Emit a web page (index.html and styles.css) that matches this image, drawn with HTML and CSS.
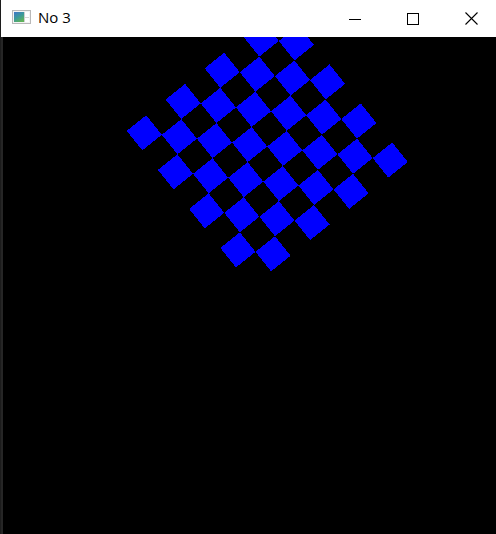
FILE: index.html
```html
<!DOCTYPE html>
<html lang="en">
<head>
<meta charset="utf-8">
<title>No 3</title>
<link rel="stylesheet" href="styles.css">
</head>
<body>
<div class="window">
  <header class="titlebar">
    <svg class="app-icon" width="19" height="14" viewBox="0 0 19 14">
      <defs>
        <linearGradient id="ig" x1="0" y1="0" x2="0.6" y2="1">
          <stop offset="0" stop-color="#3f74c9"/>
          <stop offset="0.55" stop-color="#3c9a9a"/>
          <stop offset="1" stop-color="#5fb25a"/>
        </linearGradient>
      </defs>
      <rect x="0.5" y="0.5" width="18" height="13" fill="#f4f4f4" stroke="#b9b9b9"/>
      <rect x="2" y="2" width="10" height="10" fill="url(#ig)"/>
      <rect x="13" y="2" width="4" height="10" fill="#ffffff"/>
      <line x1="13" y1="7.5" x2="17" y2="7.5" stroke="#d6d6d6"/>
      <line x1="12.5" y1="2" x2="12.5" y2="12" stroke="#cfcfcf"/>
    </svg>
    <span class="title">No 3</span>
    <div class="controls">
      <div class="ctl">
        <svg width="12" height="12" viewBox="0 0 12 12"><line x1="0" y1="6.5" x2="12" y2="6.5" stroke="#000" stroke-width="1"/></svg>
      </div>
      <div class="ctl">
        <svg width="12" height="12" viewBox="0 0 12 12"><rect x="0.5" y="0.5" width="11" height="11" fill="none" stroke="#000" stroke-width="1"/></svg>
      </div>
      <div class="ctl">
        <svg width="13" height="13" viewBox="0 0 13 13"><path d="M0.5 0.5 L12.5 12.5 M12.5 0.5 L0.5 12.5" stroke="#000" stroke-width="1.1" fill="none"/></svg>
      </div>
    </div>
  </header>
  <main class="canvas">
    <svg class="board" width="493" height="497" viewBox="0 0 493 497" shape-rendering="crispEdges">
      <g transform="translate(123.6 93.85) rotate(-38.68)" fill="#0000ff">
        <rect x="0" y="0" width="25" height="25"/>
        <rect x="50" y="0" width="25" height="25"/>
        <rect x="100" y="0" width="25" height="25"/>
        <rect x="150" y="0" width="25" height="25"/>
        <rect x="25" y="25" width="25" height="25"/>
        <rect x="75" y="25" width="25" height="25"/>
        <rect x="125" y="25" width="25" height="25"/>
        <rect x="175" y="25" width="25" height="25"/>
        <rect x="0" y="50" width="25" height="25"/>
        <rect x="50" y="50" width="25" height="25"/>
        <rect x="100" y="50" width="25" height="25"/>
        <rect x="150" y="50" width="25" height="25"/>
        <rect x="25" y="75" width="25" height="25"/>
        <rect x="75" y="75" width="25" height="25"/>
        <rect x="125" y="75" width="25" height="25"/>
        <rect x="175" y="75" width="25" height="25"/>
        <rect x="0" y="100" width="25" height="25"/>
        <rect x="50" y="100" width="25" height="25"/>
        <rect x="100" y="100" width="25" height="25"/>
        <rect x="150" y="100" width="25" height="25"/>
        <rect x="25" y="125" width="25" height="25"/>
        <rect x="75" y="125" width="25" height="25"/>
        <rect x="125" y="125" width="25" height="25"/>
        <rect x="175" y="125" width="25" height="25"/>
        <rect x="0" y="150" width="25" height="25"/>
        <rect x="50" y="150" width="25" height="25"/>
        <rect x="100" y="150" width="25" height="25"/>
        <rect x="150" y="150" width="25" height="25"/>
        <rect x="25" y="175" width="25" height="25"/>
        <rect x="75" y="175" width="25" height="25"/>
        <rect x="125" y="175" width="25" height="25"/>
        <rect x="175" y="175" width="25" height="25"/>
      </g>
    </svg>
  </main>
</div>
</body>
</html>
```

FILE: styles.css
```css
html, body {
  margin: 0;
  padding: 0;
  width: 496px;
  height: 534px;
  overflow: hidden;
  background: #000;
}

.window {
  width: 496px;
  height: 534px;
  box-sizing: border-box;
  border-left: 1px solid #1c1c1c;
  display: flex;
  flex-direction: column;
  overflow: hidden;
}

.titlebar {
  height: 37px;
  flex-shrink: 0;
  background: #ffffff;
  display: flex;
  align-items: flex-start;
  overflow: hidden;
}

.app-icon {
  display: block;
  margin: 10px 0 0 11px;
  flex-shrink: 0;
}

.title {
  margin: 7px 0 0 7px;
  font-family: "Open Sans", "Noto Sans", "Liberation Sans", sans-serif;
  font-size: 15px;
  line-height: 20px;
  color: #000;
  flex: 1;
  white-space: nowrap;
}

.controls {
  display: flex;
  margin-right: -4px;
  flex-shrink: 0;
}

.ctl {
  width: 58px;
  height: 37px;
  display: flex;
  align-items: center;
  justify-content: center;
}

.ctl svg {
  display: block;
}

.canvas {
  flex: 1;
  background: #000;
  border-left: 2px solid #262626;
  overflow: hidden;
}

.board {
  display: block;
}
```
